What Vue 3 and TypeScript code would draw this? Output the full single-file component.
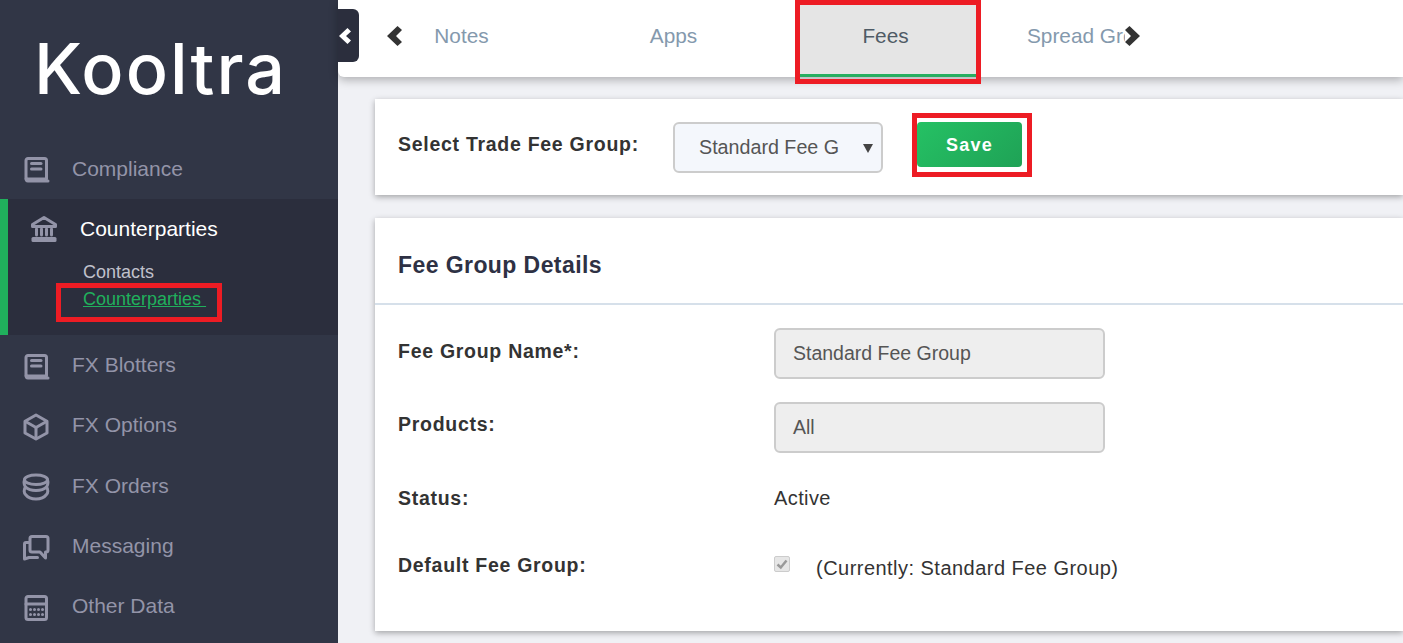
<script setup lang="ts">
interface NavItem {
  label: string
  paths: string[]
}

const icons: Record<string, string[]> = {
  book: [
    'M6 2.500H22.500a2 2 0 0 1 2 2V23H6a2 2 0 0 1-2-2V4.500a2 2 0 0 1 2-2z',
    'M4 22.500a2 2 0 0 0 2 2.500H26',
    'M9.500 7.500H19',
    'M9.500 13H19'
  ],
  bank: [
    'M14 2.500L25.500 9.500V11.500H2.500V9.500z',
    'M6.500 14V20',
    'M11.500 14V20',
    'M16.500 14V20',
    'M21.500 14V20',
    'M3 23.500V25.500H25V23.500z'
  ],
  cube: ['M14 2L25 8.200V20L14 26L3 20V8.200z', 'M3.500 8.500L14 14.500L24.500 8.500', 'M14 14.500V25.500'],
  db: [
    'M14 2c6.400 0 11.500 2 11.500 4.700S20.400 11.500 14 11.500S2.500 9.500 2.500 6.700S7.600 2 14 2z',
    'M2.500 6.700C1.500 9.500 2.500 13 3.500 14C6 16.500 10 17.500 14 17.500S22 16.500 24.500 14C25.500 13 26.500 9.500 25.500 6.700',
    'M3.500 14C1.500 16.500 2 20 3.500 21.500C6 24.800 10 26 14 26S22 24.800 24.500 21.500C26 20 26.500 16.500 24.500 14'
  ],
  chat: [
    'M10 2.500H24a2 2 0 0 1 2 2V16a2 2 0 0 1-2 2H23.500V24L18 18H10a2 2 0 0 1-2-2V4.500a2 2 0 0 1 2-2z',
    'M7.500 8.500H4a1.500 1.500 0 0 0-1.500 1.500V25L7 23.500H15.500'
  ],
  calc: [
    'M6 2.500H22.500a2 2 0 0 1 2 2V23.500a2 2 0 0 1-2 2H6a2 2 0 0 1-2-2V4.500a2 2 0 0 1 2-2z',
    'M4 10H24.500',
    'M8.500 15.500h.01',
    'M12.500 15.500h.01',
    'M16.500 15.500h.01',
    'M20.500 15.500h.01',
    'M8.500 20.500h.01',
    'M12.500 20.500h.01',
    'M16.500 20.500h.01',
    'M20.500 20.500h.01'
  ]
}

const lowerNav: NavItem[] = [
  { label: 'FX Blotters', paths: icons.book },
  { label: 'FX Options', paths: icons.cube },
  { label: 'FX Orders', paths: icons.db },
  { label: 'Messaging', paths: icons.chat },
  { label: 'Other Data', paths: icons.calc }
]

const tabs = [
  { label: 'Notes', active: false },
  { label: 'Apps', active: false },
  { label: 'Fees', active: true },
  { label: 'Spread Groups', active: false }
]
</script>

<template>
  <div class="page">
    <aside class="sidebar">
      <div class="logo">Kooltra</div>
      <nav>
        <a class="nav-row first">
          <svg class="ico" viewBox="0 0 28 28"><path v-for="d in icons.book" :key="d" :d="d" /></svg>
          <span>Compliance</span>
        </a>
        <div class="group">
          <a class="group-head">
            <svg class="ico" viewBox="0 0 28 28"><path v-for="d in icons.bank" :key="d" :d="d" /></svg>
            <span>Counterparties</span>
          </a>
          <a class="sub">Contacts</a>
          <a class="sub sub-active">Counterparties&nbsp;</a>
        </div>
        <a v-for="item in lowerNav" :key="item.label" class="nav-row">
          <svg class="ico" viewBox="0 0 28 28"><path v-for="d in item.paths" :key="d" :d="d" /></svg>
          <span>{{ item.label }}</span>
        </a>
      </nav>
    </aside>

    <main class="main">
      <header class="topbar">
        <button class="arrow" aria-label="Previous">
          <svg viewBox="0 0 16 20" width="16" height="20"><path d="M16 4L11.500 0L1 10L11.500 20L16 16L10 10z" /></svg>
        </button>
        <div class="tab-view">
          <div class="tab-track">
            <div v-for="t in tabs" :key="t.label" class="tab" :class="{ active: t.active }">{{ t.label }}</div>
          </div>
        </div>
        <button class="arrow" aria-label="Next">
          <svg viewBox="0 0 16 20" width="16" height="20"><path d="M0 4L4.500 0L15 10L4.500 20L0 16L6 10z" /></svg>
        </button>
      </header>

      <section class="card select-card">
        <label class="label">Select Trade Fee Group:</label>
        <div class="select">
          <span class="select-text">Standard Fee G</span>
          <svg class="caret" viewBox="0 0 10 9" width="10" height="9"><path d="M0 0H10L5 9z" /></svg>
        </div>
        <button class="save">Save</button>
      </section>

      <section class="card details-card">
        <h2 class="title">Fee Group Details</h2>
        <div class="form">
          <div class="label field-label">Fee Group Name*:</div>
          <div class="input">Standard Fee Group</div>
          <div class="label field-label products-label">Products:</div>
          <div class="input">All</div>
          <div class="label status-label">Status:</div>
          <div class="status">Active</div>
          <div class="label default-label">Default Fee Group:</div>
          <div class="default">
            <span class="check">
              <svg viewBox="0 0 14 14" width="14" height="14"><path d="M2.500 7.500L5.800 10.500L11.500 3.500" /></svg>
            </span>
            <span class="current">(Currently: Standard Fee Group)</span>
          </div>
        </div>
      </section>
    </main>

    <button class="collapse" aria-label="Collapse sidebar">
      <svg viewBox="0 0 14 16" width="14" height="16"><path d="M13 3.500L9.500 0L1 8L9.500 16L13 12.500L8 8z" /></svg>
    </button>

    <i class="mark mark-tab"></i>
    <i class="mark mark-save"></i>
    <i class="mark mark-link"></i>
  </div>
</template>

<style>
html,
body {
  margin: 0;
  overflow: hidden;
  background: #f0f1f5;
}
</style>

<style scoped>
.page {
  position: relative;
  display: flex;
  width: 1403px;
  height: 643px;
  overflow: hidden;
  font-family: "Liberation Sans", Arial, sans-serif;
  color: #333;
  background: #f0f1f5;
}

.sidebar {
  flex: 0 0 338px;
  background: #313646;
  color: #9394a8;
  font-size: 21px;
}

.logo {
  height: 139px;
  box-sizing: border-box;
  padding: 27px 0 0 34px;
  color: #fff;
  font-family: Inter, sans-serif;
  font-size: 70px;
  font-weight: 500;
  line-height: 84px;
  letter-spacing: 2px;
}

.nav-row {
  display: flex;
  align-items: center;
  gap: 22px;
  height: 60.300px;
  padding-left: 22px;
}

.nav-row .ico {
  margin-top: 3px;
}

.nav-row.first {
  height: 60px;
}

.nav-row.first .ico {
  margin-top: 2px;
}

.ico {
  flex: none;
  width: 28px;
  height: 28px;
  fill: none;
  stroke: #9394a8;
  stroke-width: 3;
  stroke-linecap: round;
  stroke-linejoin: round;
}

.group {
  height: 136px;
  box-sizing: border-box;
  border-left: 8px solid #20b05c;
  background: #2b2e3d;
}

.group-head {
  display: flex;
  align-items: center;
  gap: 22.500px;
  height: 60px;
  padding-left: 21.500px;
  color: #fff;
}

.sub {
  display: block;
  height: 27px;
  padding-left: 75px;
  color: #c0c1cc;
  font-size: 18px;
  line-height: 27px;
}

.sub-active {
  color: #20b05c;
  text-decoration: underline;
}

.main {
  flex: 1;
  min-width: 0;
}

.topbar {
  display: flex;
  align-items: center;
  height: 77px;
  box-sizing: border-box;
  padding-left: 48px;
  border-bottom-left-radius: 6px;
  background: #fff;
  box-shadow: 0 3px 10px rgba(0, 0, 0, 0.28);
}

.arrow {
  flex: none;
  width: 16px;
  height: 20px;
  margin-bottom: 6px;
  padding: 0;
  border: 0;
  background: none;
}

.arrow svg {
  display: block;
  fill: #333;
}

.tab-view {
  flex: none;
  width: 720px;
  height: 77px;
  margin: 0 0 0 3px;
  overflow: hidden;
}

.tab-track {
  display: flex;
  gap: 36px;
  margin-left: -29px;
}

.tab {
  flex: none;
  width: 176px;
  height: 78px;
  box-sizing: border-box;
  padding-right: 5px;
  color: #8499ad;
  font-size: 20.800px;
  line-height: 71px;
  text-align: center;
  white-space: nowrap;
}

.tab.active {
  height: 78px;
  border-bottom: 4px solid #27ae60;
  background: #e5e5e5;
  color: #4f5b66;
}

.card {
  margin-left: 37px;
  background: #fff;
  box-shadow: 0 2px 6px rgba(0, 0, 0, 0.32);
}

.select-card {
  display: flex;
  align-items: flex-start;
  height: 96px;
  box-sizing: border-box;
  margin-top: 22px;
  padding: 23px 0 0 23px;
}

.label {
  color: #333;
  font-size: 19.500px;
  font-weight: 700;
  letter-spacing: 0.720px;
}

.select-card .label {
  width: 276px;
  margin-right: -1px;
  flex: none;
  line-height: 44px;
}

.select {
  display: flex;
  align-items: center;
  justify-content: space-between;
  width: 210px;
  height: 51px;
  box-sizing: border-box;
  padding: 0 8px 0 24px;
  border: 2px solid #ccc;
  border-radius: 6px;
  background: #f4f7fc;
  color: #555;
  font-size: 19.700px;
}

.caret {
  fill: #444;
  margin-top: 1px;
}

.save {
  width: 105px;
  height: 45px;
  margin-left: 34px;
  padding: 2px 0 0;
  border: 0;
  border-radius: 4px;
  background: linear-gradient(135deg, #25c164, #1fa256);
  color: #fff;
  font-family: inherit;
  font-size: 18px;
  font-weight: 700;
  letter-spacing: 1.200px;
}

.details-card {
  height: 413px;
  margin-top: 23px;
}

.title {
  height: 87px;
  box-sizing: border-box;
  margin: 0;
  padding-left: 23px;
  border-bottom: 2px solid #d6e0ea;
  color: #2e3144;
  font-size: 23px;
  line-height: 94px;
  letter-spacing: 0.420px;
}

.form {
  display: grid;
  grid-template-columns: 376px 331px;
  grid-auto-rows: auto;
  row-gap: 23px;
  padding: 23px 0 0 23px;
}

.field-label {
  line-height: 46px;
}

.products-label {
  line-height: 44px;
}

.input {
  height: 51px;
  box-sizing: border-box;
  padding-left: 17px;
  border: 2px solid #ccc;
  border-radius: 6px;
  background: #eee;
  color: #555;
  font-size: 19.500px;
  line-height: 47px;
}

.status-label,
.status {
  line-height: 44px;
}

.status {
  font-size: 20px;
  letter-spacing: 0.400px;
}

.default-label {
  line-height: 45px;
}

.default {
  display: flex;
  align-items: center;
  height: 46px;
  font-size: 20px;
  letter-spacing: 0.470px;
  white-space: nowrap;
}

.check {
  display: flex;
  align-items: center;
  justify-content: center;
  width: 16px;
  height: 16px;
  box-sizing: border-box;
  margin-top: -5px;
  border: 1px solid #ccc;
  border-radius: 2px;
  background: #e6e6e6;
}

.check svg {
  fill: none;
  stroke: #999;
  stroke-width: 2.500;
}

.current {
  margin: 4px 0 0 26px;
}

.collapse {
  position: absolute;
  top: 9px;
  left: 338px;
  width: 21px;
  height: 53px;
  padding: 0;
  border: 0;
  border-radius: 0 6px 6px 0;
  background: #2b2e3d;
}

.collapse svg {
  display: block;
  fill: #fff;
}

.mark {
  position: absolute;
  box-sizing: border-box;
  border: 5px solid #ed1c24;
}

.mark-tab {
  top: 0;
  left: 795px;
  width: 186px;
  height: 84px;
}

.mark-save {
  top: 113px;
  left: 912px;
  width: 120px;
  height: 64px;
}

.mark-link {
  top: 283px;
  left: 56px;
  width: 166px;
  height: 39px;
}
</style>
